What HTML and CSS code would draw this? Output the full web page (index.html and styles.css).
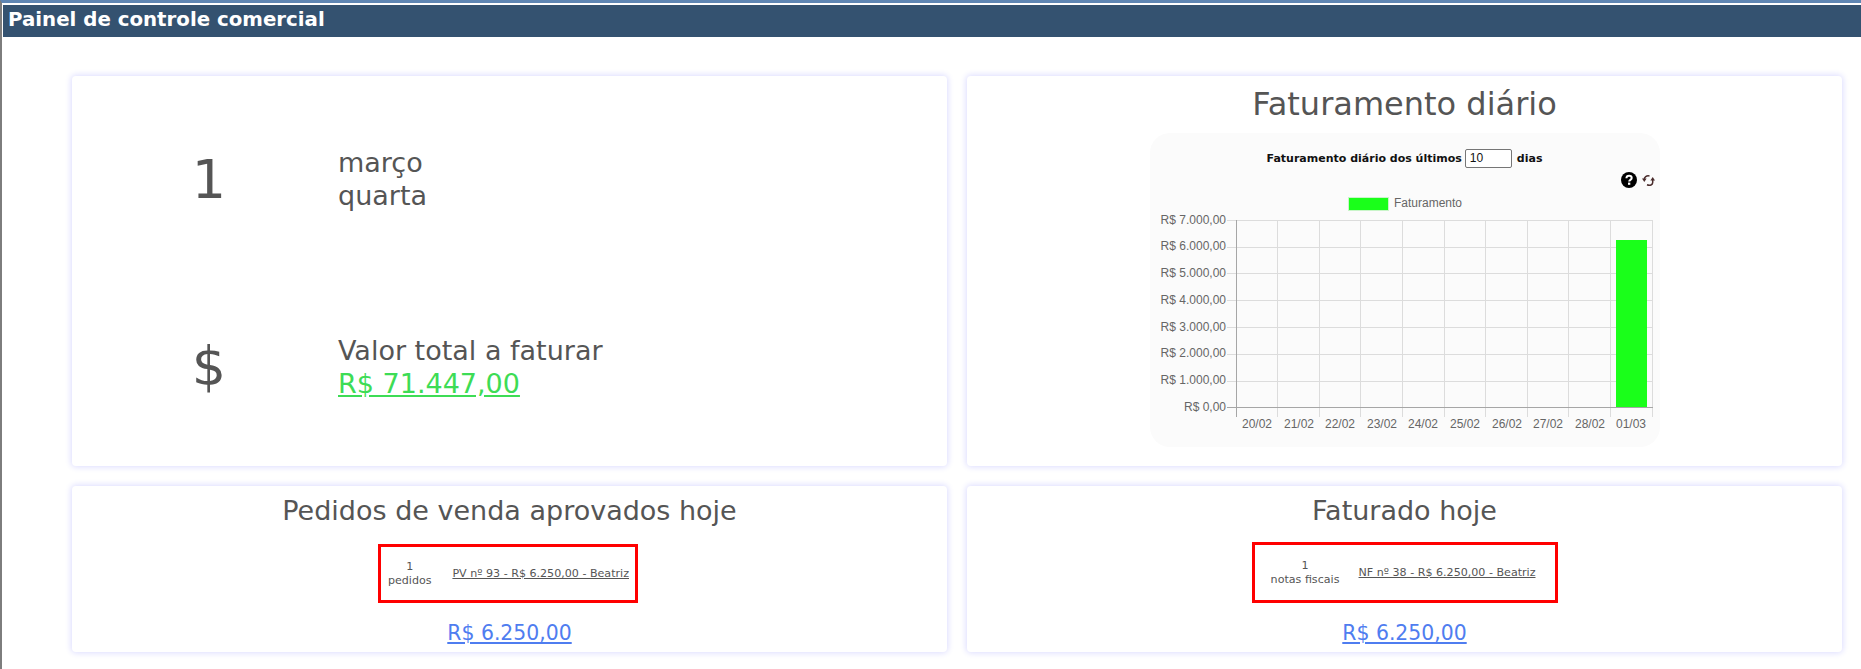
FILE: index.html
```html
<!DOCTYPE html>
<html lang="pt-BR">
<head>
<meta charset="utf-8">
<title>Painel de controle comercial</title>
<link rel="stylesheet" href="styles.css">
</head>
<body>
<div class="page">
  <h1 class="page-title">Painel de controle comercial</h1>
  <main class="grid">
    <section class="card summary">
      <div class="stat">
        <div class="stat-big">1</div>
        <div class="stat-text">março<br>quarta</div>
      </div>
      <div class="stat stat-money">
        <div class="stat-big">$</div>
        <div class="stat-text">Valor total a faturar<br><a class="green" href="#">R$ 71.447,00</a></div>
      </div>
    </section>
    <section class="card chart-card">
      <h2 class="chart-heading">Faturamento diário</h2>
      <div class="chart-panel">
        <div class="chart-form"><b>Faturamento diário dos últimos</b><span class="days-input">10</span><b>dias</b></div>
        <div class="chart-tools">
          <svg class="icon-help" width="16" height="16" viewBox="0 0 16 16"><circle cx="8" cy="8" r="8" fill="#000"/><path d="M5.4 6.2C5.5 4.6 6.7 3.8 8.1 3.8c1.5 0 2.6 .9 2.6 2.2 0 1.9-2.5 1.9-2.5 3.6" fill="none" stroke="#fff" stroke-width="2"/><rect x="7" y="10.600" width="2.300" height="2.200" fill="#fff"/></svg>
          <svg class="icon-sync" width="13" height="13" viewBox="0 0 13 13"><path d="M2.200 5.500C2.200 3 4.500 1.300 7.500 2" fill="none" stroke="#4a2c2c" stroke-width="1.500"/><path d="M0 4.500h4.600L2.300 8z" fill="#4a2c2c"/><path d="M10.700 6v2.500C10.700 10.800 8 12 5 10.800" fill="none" stroke="#4a2c2c" stroke-width="1.500"/><path d="M8.400 6.500h4.600L10.700 3z" fill="#4a2c2c"/></svg>
        </div>
        <svg class="chart" width="510" height="270" viewBox="1149 178 510 270">
          <rect class="legend-box" x="1347.500" y="197.500" width="40" height="13"/>
          <text class="legend-label" x="1393" y="207">Faturamento</text>
          <g class="grid-lines">
            <path d="M1226 220.500H1652M1226 247.500H1652M1226 273.500H1652M1226 300.500H1652M1226 327.500H1652M1226 354.500H1652M1226 381.500H1652"/>
            <path d="M1276.500 220V417M1318.500 220V417M1359.500 220V417M1401.500 220V417M1443.500 220V417M1484.500 220V417M1526.500 220V417M1567.500 220V417M1609.500 220V417M1651.500 220V417"/>
          </g>
          <path class="axis" d="M1235.500 220V417M1226 407.500H1652"/>
          <rect class="bar" x="1615" y="240" width="31" height="167"/>
          <g class="y-labels">
            <text x="1225" y="224">R$ 7.000,00</text>
            <text x="1225" y="250">R$ 6.000,00</text>
            <text x="1225" y="277">R$ 5.000,00</text>
            <text x="1225" y="304">R$ 4.000,00</text>
            <text x="1225" y="331">R$ 3.000,00</text>
            <text x="1225" y="357">R$ 2.000,00</text>
            <text x="1225" y="384">R$ 1.000,00</text>
            <text x="1225" y="411">R$ 0,00</text>
          </g>
          <g class="x-labels">
            <text x="1256" y="428">20/02</text>
            <text x="1298" y="428">21/02</text>
            <text x="1339" y="428">22/02</text>
            <text x="1381" y="428">23/02</text>
            <text x="1422" y="428">24/02</text>
            <text x="1464" y="428">25/02</text>
            <text x="1506" y="428">26/02</text>
            <text x="1547" y="428">27/02</text>
            <text x="1589" y="428">28/02</text>
            <text x="1630" y="428">01/03</text>
          </g>
        </svg>
      </div>
    </section>
    <section class="card list-card">
      <h2 class="list-heading">Pedidos de venda aprovados hoje</h2>
      <div class="red-box">
        <div class="count">1<br>pedidos</div>
        <a class="item-link" href="#">PV nº 93 - R$ 6.250,00 - Beatriz</a>
      </div>
      <a class="total" href="#">R$ 6.250,00</a>
    </section>
    <section class="card list-card">
      <h2 class="list-heading">Faturado hoje</h2>
      <div class="red-box red-box-wide">
        <div class="count">1<br>notas fiscais</div>
        <a class="item-link" href="#">NF nº 38 - R$ 6.250,00 - Beatriz</a>
      </div>
      <a class="total" href="#">R$ 6.250,00</a>
    </section>
  </main>
</div>
</body>
</html>
```
FILE: styles.css
```css
* { box-sizing: border-box; }
html, body { margin: 0; height: 100%; background: #fff; overflow: hidden; }
body {
  font-family: "DejaVu Sans", Verdana, sans-serif;
  color: #555;
}
.page {
  height: 669px;
  border-top: 3px solid #5f86b3;
  border-left: 2px solid #7d7d7d;
  padding: 2px 0 0 1px;
}
.page-title {
  margin: 0;
  height: 32px;
  padding-left: 5px;
  background: #345270;
  color: #fff;
  font-size: 19.800px;
  font-weight: bold;
  line-height: 29px;
}
.grid {
  display: grid;
  grid-template-columns: 875px 875px;
  grid-template-rows: 390px 166px;
  gap: 20px;
  padding: 39px 0 0 69px;
}
.card {
  background: #fff;
  border-radius: 4px;
  box-shadow: 0 0 6px 1px #dcdcff;
}
.summary { padding-top: 71px; }
.stat {
  display: grid;
  grid-template-columns: 266px 1fr;
  align-items: center;
  height: 60px;
}
.stat-money { margin-top: 127px; }
.stat-big {
  font-size: 54px;
  text-align: center;
  padding-left: 8px;
  line-height: 60px;
}
.stat-text {
  font-size: 27px;
  line-height: 33px;
}
.summary .stat:first-child .stat-text { margin-top: -1px; }
.green { color: #3ddc55; }
.chart-card { display: flex; flex-direction: column; align-items: center; }
.chart-heading {
  margin: 4px 0 0;
  font-size: 32px;
  font-weight: normal;
  line-height: 48px;
  color: #555;
}
.chart-panel {
  width: 510px;
  height: 314px;
  margin-top: 5px;
  background: #fbfbfb;
  border-radius: 20px;
  display: flex;
  flex-direction: column;
  position: relative;
}
.chart-form {
  display: flex;
  justify-content: center;
  align-items: center;
  gap: 3px;
  height: 20px;
  margin-top: 15px;
  font-size: 11px;
  color: #111;
}
.days-input {
  width: 47px;
  height: 19px;
  padding-left: 4px;
  margin-right: 2px;
  border: 1px solid #767676;
  border-radius: 2px;
  background: #fff;
  font: 12px/17px "Liberation Sans", Arial, sans-serif;
  color: #111;
}
.chart-tools {
  display: flex;
  justify-content: flex-end;
  align-items: center;
  gap: 5px;
  padding-right: 5px;
  height: 16px;
  margin-top: 4px;
}
.chart { position: absolute; left: 0; top: 45px; }
.chart text { font-family: "Liberation Sans", Arial, sans-serif; font-size: 12px; fill: #666; }
.legend-box { fill: #1aff1a; stroke: #c9f5c9; }
.grid-lines path { fill: none; stroke: #dcdcdc; stroke-width: 1; }
.axis { fill: none; stroke: #a6a6a6; stroke-width: 1; }
.bar { fill: #1aff1a; }
.y-labels text { text-anchor: end; }
.x-labels text { text-anchor: middle; }
.list-card { display: flex; flex-direction: column; align-items: center; }
.list-heading {
  margin: 7px 0 0;
  font-size: 27px;
  font-weight: normal;
  line-height: 36px;
  color: #555;
}
.red-box {
  display: flex;
  align-items: center;
  width: 260px;
  height: 59px;
  margin: 15px 3px 0 0;
  border: 3px solid #f00;
  padding: 0 6px 0 0;
  font-size: 11.100px;
  line-height: 14px;
}
.red-box-wide { width: 306px; height: 61px; margin: 13px 0 0; padding: 0 19px 0 0; }
.count { flex: 1; text-align: center; padding-right: 14px; }
.red-box-wide .count { padding-right: 3px; }
.item-link { color: #555; margin-top: 1px; }
.total { margin-top: 16px; font-size: 20.400px; line-height: 28px; color: #4f7df0; }
```
